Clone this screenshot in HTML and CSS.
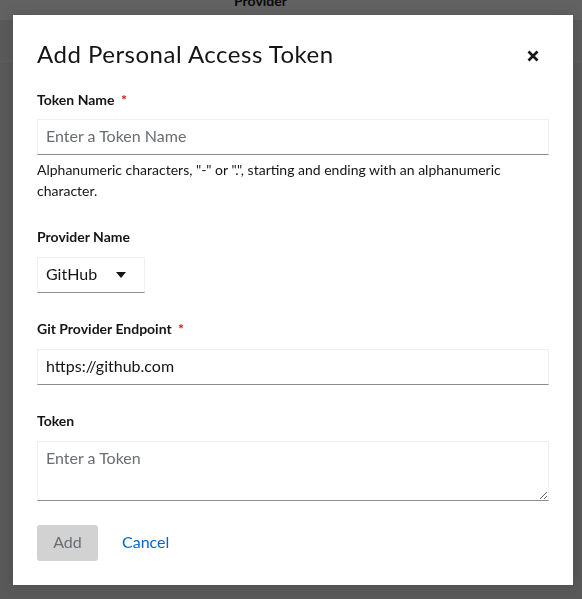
FILE: index.html
```html
<!DOCTYPE html>
<html lang="en">
<head>
<meta charset="utf-8">
<title>Add Personal Access Token</title>
<link rel="stylesheet" href="styles.css">
</head>
<body>
<div class="page">
  <div class="table-head"><span class="th-text">Provider</span></div>
  <div class="table-row"></div>
</div>
<div class="backdrop">
  <div class="modal" role="dialog" aria-labelledby="modal-title">
    <button class="close" aria-label="Close">
      <svg width="12" height="12" viewBox="0 0 12 12"><path d="M1.5 1.5 L10.5 10.5 M10.5 1.5 L1.5 10.5" stroke="#151515" stroke-width="2.6" stroke-linecap="butt"/></svg>
    </button>
    <h1 class="title" id="modal-title">Add Personal Access Token</h1>
    <form class="form">
      <div class="group">
        <label class="label" for="tn">Token Name <span class="req">*</span></label>
        <input class="input" id="tn" type="text" placeholder="Enter a Token Name">
        <div class="helper">Alphanumeric characters, "-" or ".", starting and ending with an alphanumeric character.</div>
      </div>
      <div class="group">
        <div class="label">Provider Name</div>
        <div class="select"><span>GitHub</span><svg class="caret" width="10" height="6" viewBox="0 0 10 6"><path d="M0 0 H10 L5 6 Z" fill="#151515"/></svg></div>
      </div>
      <div class="group">
        <label class="label" for="ep">Git Provider Endpoint <span class="req">*</span></label>
        <input class="input" id="ep" type="text" value="https://github.com">
      </div>
      <div class="group">
        <label class="label" for="tk">Token</label>
        <textarea class="textarea" id="tk" placeholder="Enter a Token"></textarea>
      </div>
      <div class="actions">
        <button type="button" class="btn-add" disabled>Add</button>
        <button type="button" class="btn-link">Cancel</button>
      </div>
    </form>
  </div>
</div>
</body>
</html>
```
FILE: styles.css
```css
* { box-sizing: border-box; }
html, body { margin: 0; padding: 0; }
body {
  width: 582px;
  height: 599px;
  overflow: hidden;
  font-family: Lato, "Open Sans", sans-serif;
  background: #e4e4e4;
  color: #151515;
}
.page { height: 599px; }
.table-head {
  height: 20px;
  background: #fbfbfb;
  border-bottom: 1px solid #ffffff;
  display: flex;
  padding-left: 234px;
}
.th-text {
  font-weight: 700;
  font-size: 14px;
  line-height: 14px;
  margin-top: -6px;
  color: #151515;
}
.table-row {
  height: 42px;
  border-bottom: 1px solid #f4f4f4;
  background: #e8e8e8;
}
.backdrop {
  position: fixed;
  inset: 0;
  background: rgba(3, 3, 3, 0.62);
  padding: 15px 0 0 13px;
}
.modal {
  position: relative;
  width: 560px;
  height: 570px;
  background: #fff;
  padding: 23px 24px 0 24px;
  box-shadow: 0 0 12px rgba(0,0,0,0.15);
}
.close {
  position: absolute;
  top: 35px;
  right: 34px;
  width: 12px;
  height: 12px;
  padding: 0;
  border: 0;
  background: none;
  display: block;
}
.close svg { display: block; }
.title {
  margin: 0;
  font-weight: 400;
  font-size: 24px;
  line-height: 31px;
  letter-spacing: 0.5px;
  color: #151515;
}
.form {
  margin-top: 20px;
  display: flex;
  flex-direction: column;
  gap: 25px;
}
.group { display: flex; flex-direction: column; }
.label {
  font-size: 14px;
  font-weight: 700;
  line-height: 22px;
  margin-bottom: 9px;
  color: #151515;
}
.group:first-child .label { margin-bottom: 8px; }
.req { color: #c9190b; margin-left: 3px; }
.input, .textarea, .select {
  width: 512px;
  height: 36px;
  border: 1px solid #f0f0f0;
  border-bottom-color: #8a8d90;
  font-family: inherit;
  font-size: 16px;
  color: #151515;
  padding: 3px 8px 7px;
  background: #fff;
  border-radius: 0;
  outline: none;
}
.input::placeholder, .textarea::placeholder { color: #6a6e73; opacity: 1; }
.textarea {
  height: 60px;
  resize: vertical;
  line-height: 24px;
  padding: 4px 8px;
}
.helper {
  margin-top: 4px;
  font-size: 14px;
  line-height: 21px;
  color: #151515;
}
.select {
  width: 108px;
  display: flex;
  align-items: center;
  justify-content: space-between;
  padding: 0 18px 4px 8px;
}
.caret { display: block; margin-top: 3px; }
.actions {
  display: flex;
  align-items: center;
  gap: 8px;
  margin-top: -1px;
}
.btn-add {
  width: 61px;
  height: 36px;
  border: 0;
  border-radius: 3px;
  background: #d2d2d2;
  color: #6a6e73;
  font-family: inherit;
  font-size: 16px;
  padding: 0 0 4px;
}
.btn-link {
  border: 0;
  background: none;
  color: #0066cc;
  font-family: inherit;
  font-size: 16px;
  padding: 0 16px 4px;
  height: 36px;
}
```
